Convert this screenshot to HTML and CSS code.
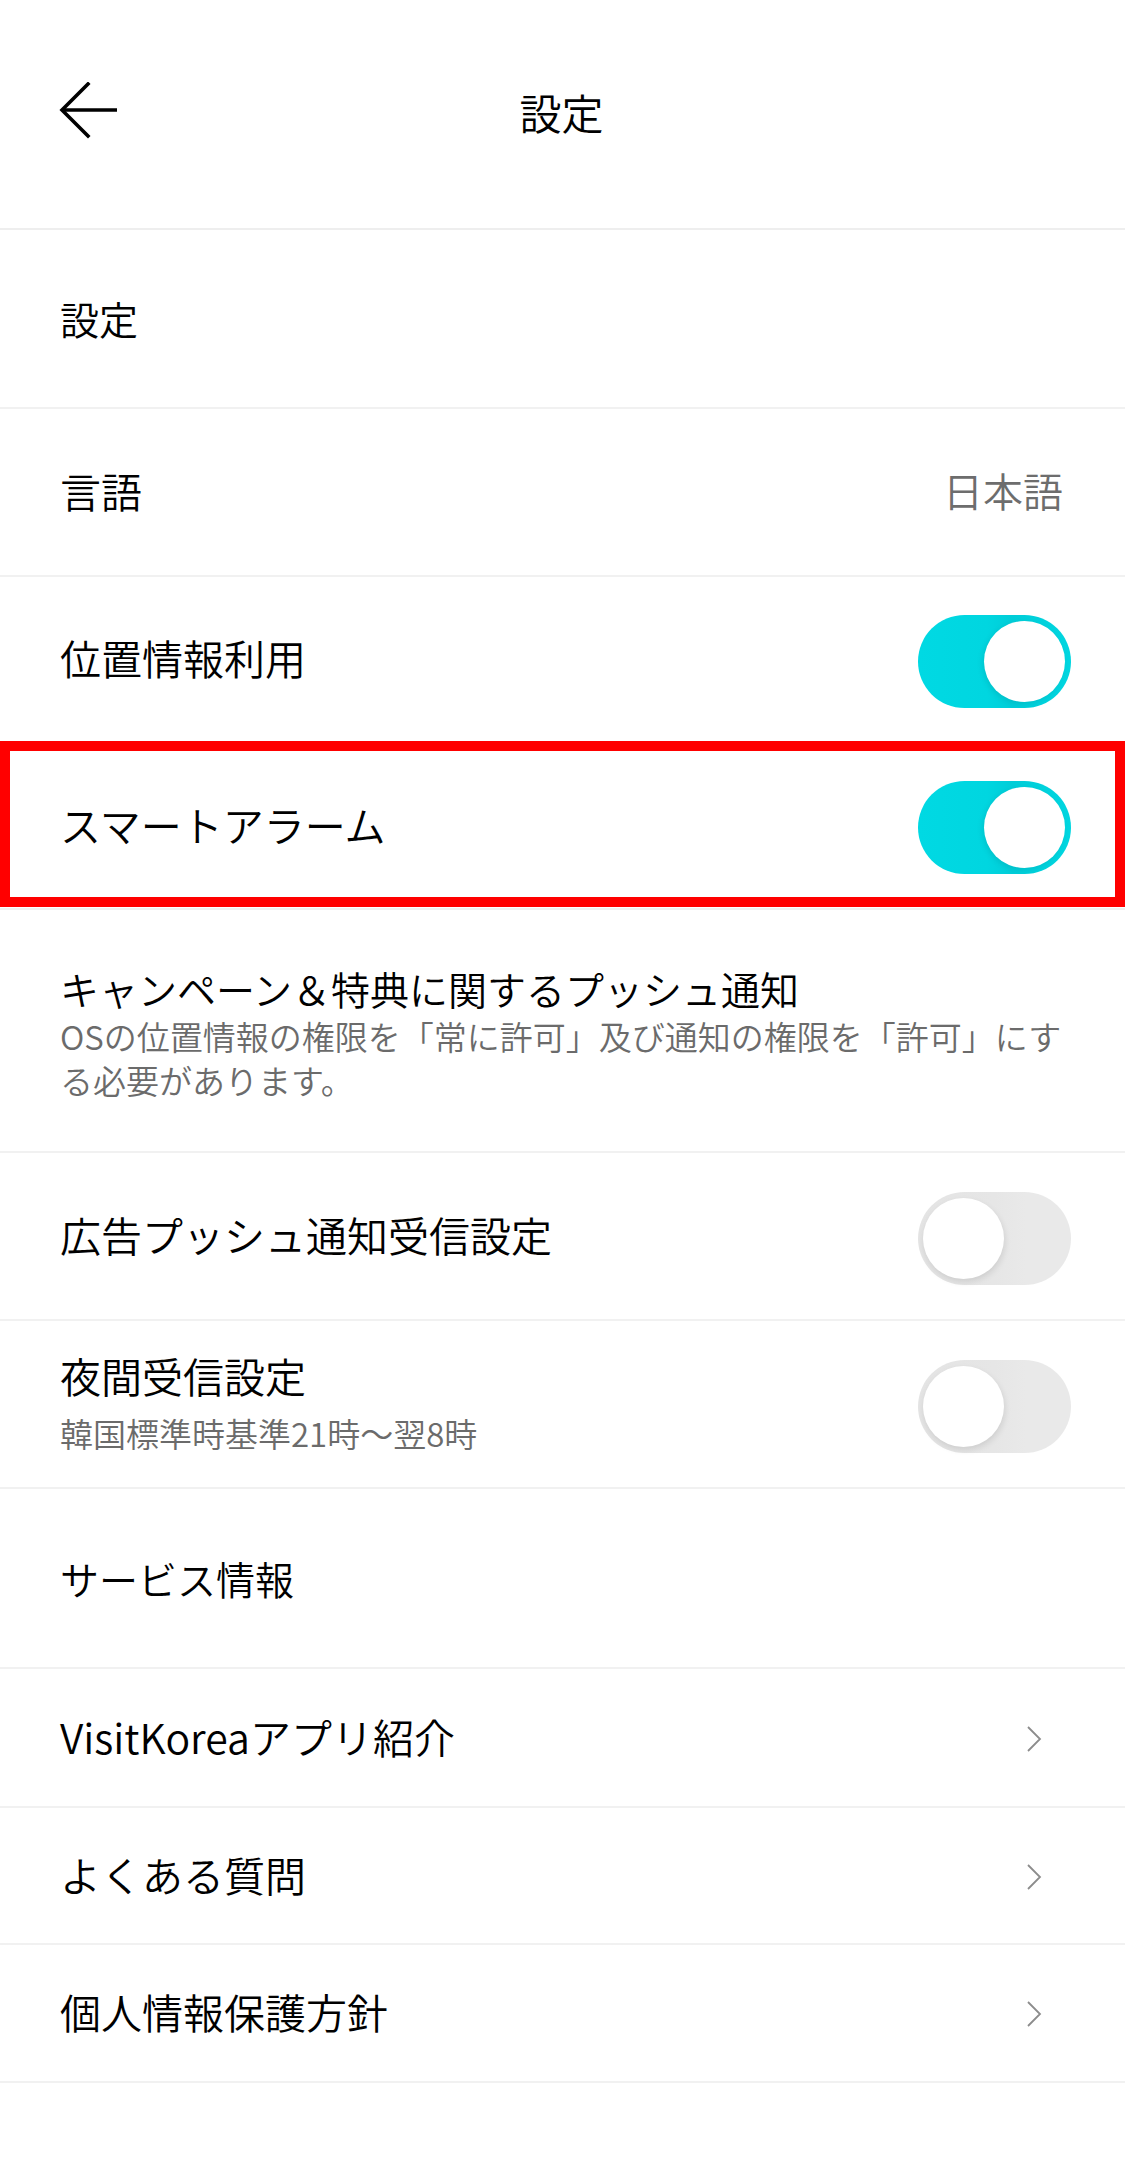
FILE: index.html
```html
<!DOCTYPE html>
<html lang="ja">
<head>
<meta charset="utf-8">
<title>設定</title>
<link rel="stylesheet" href="styles.css">
</head>
<body>
<div class="screen">
  <header class="topbar">
    <div class="back">
      <svg width="60" height="60" viewBox="0 0 60 60" aria-hidden="true">
        <polyline points="29,2 3,28 29,54" fill="none" stroke="#000" stroke-width="3.6" stroke-linecap="square" stroke-linejoin="miter"/>
        <line x1="4" y1="28" x2="58" y2="28" stroke="#000" stroke-width="3.6"/>
      </svg>
    </div>
    <h1 class="title">設定</h1>
    <div class="spacer"></div>
  </header>

  <div class="row section h179"><span class="section-label">設定</span></div>

  <div class="row h168">
    <span class="label">言語</span>
    <span class="value">日本語</span>
  </div>

  <div class="row h166">
    <span class="label">位置情報利用</span>
    <span class="toggle on"><span class="knob"></span></span>
  </div>

  <div class="row h167 highlighted">
    <span class="label">スマートアラーム</span>
    <span class="toggle on"><span class="knob"></span></span>
    <span class="redbox"></span>
  </div>

  <div class="row h243 campaign">
    <div class="text">
      <div class="label">キャンペーン＆特典に関するプッシュ通知</div>
      <div class="sub">OSの位置情報の権限を「常に許可」及び通知の権限を「許可」にする必要があります。</div>
    </div>
  </div>

  <div class="row h168">
    <span class="label">広告プッシュ通知受信設定</span>
    <span class="toggle off"><span class="knob"></span></span>
  </div>

  <div class="row h168">
    <div class="text">
      <div class="label">夜間受信設定</div>
      <div class="sub spaced">韓国標準時基準21時〜翌8時</div>
    </div>
    <span class="toggle off"><span class="knob"></span></span>
  </div>

  <div class="row section h180"><span class="section-label">サービス情報</span></div>

  <div class="row h139">
    <span class="label">VisitKoreaアプリ紹介</span>
    <svg class="chev" width="16" height="26" viewBox="0 0 16 26" aria-hidden="true"><polyline points="2,1 14,13 2,25" fill="none" stroke="#8c8c8c" stroke-width="1.8"/></svg>
  </div>

  <div class="row h137">
    <span class="label">よくある質問</span>
    <svg class="chev" width="16" height="26" viewBox="0 0 16 26" aria-hidden="true"><polyline points="2,1 14,13 2,25" fill="none" stroke="#8c8c8c" stroke-width="1.8"/></svg>
  </div>

  <div class="row h138">
    <span class="label">個人情報保護方針</span>
    <svg class="chev" width="16" height="26" viewBox="0 0 16 26" aria-hidden="true"><polyline points="2,1 14,13 2,25" fill="none" stroke="#8c8c8c" stroke-width="1.8"/></svg>
  </div>
</div>
</body>
</html>
```

FILE: styles.css
```css
* { box-sizing: border-box; }
html, body {
  margin: 0;
  padding: 0;
  background: #ffffff;
}
body {
  font-family: "Noto Sans CJK JP", "Noto Sans", sans-serif;
  font-weight: 350;
  color: #000;
  width: 1125px;
  height: 2184px;
  overflow: hidden;
}
.screen {
  width: 1125px;
  display: flex;
  flex-direction: column;
}
.topbar {
  height: 230px;
  border-bottom: 2px solid #eeeeee;
  display: grid;
  grid-template-columns: 1fr auto 1fr;
  align-items: center;
  padding-bottom: 4px;
}
.back {
  padding-left: 59px;
  display: flex;
  align-items: center;
  height: 60px;
}
.back svg { display: block; }
.title {
  margin: 0;
  font-size: 42px;
  font-weight: 350;
  line-height: 1.2;
  text-align: center;
  margin-right: 2px;
}
.row {
  position: relative;
  display: flex;
  align-items: center;
  justify-content: space-between;
  padding: 0 54px 0 60px;
  border-bottom: 2px solid #f1f1f1;
}
.h179 { height: 179px; }
.h180 { height: 180px; }
.h168 { height: 168px; }
.h166 { height: 166px; }
.h167 { height: 167px; }
.h243 { height: 243px; }
.h139 { height: 139px; }
.h137 { height: 137px; }
.h138 { height: 138px; }

.section-label {
  font-size: 39px;
  line-height: 1.2;
}
.label {
  font-size: 41px;
  line-height: 52px;
  margin-top: -4px;
}
.value {
  font-size: 40px;
  line-height: 50px;
  color: #6d6d6d;
  margin-right: 8px;
  margin-top: -4px;
}
.text {
  display: flex;
  flex-direction: column;
}
.sub {
  font-size: 33px;
  line-height: 44px;
  color: #6b6b6b;
}
.sub.spaced { margin-top: 10px; }
.campaign {
  padding-right: 48px;
  padding-top: 2px;
  align-items: center;
}
.campaign .label {
  margin-top: 0;
  font-size: 39px;
  line-height: 52px;
}

.toggle {
  position: relative;
  width: 153px;
  height: 93px;
  border-radius: 47px;
  flex: none;
  margin-top: 4px;
}
.toggle.on {
  background: linear-gradient(90deg, #00d9e3 0%, #00d6e0 45%, #00cdd8 62%, #00d6e0 100%);
}
.toggle.off {
  background: linear-gradient(90deg, #e4e4e4 0%, #e6e6e6 50%, #e9e9e9 70%, #e9e9e9 100%);
}
.knob {
  position: absolute;
  top: 6px;
  width: 81px;
  height: 81px;
  border-radius: 50%;
  background: #fff;
}
.toggle.on .knob {
  right: 6px;
  box-shadow: -2px 2px 5px rgba(0, 120, 130, 0.18);
}
.toggle.off .knob {
  left: 5px;
  box-shadow: 1px 3px 6px rgba(0, 0, 0, 0.10);
}
.chev {
  display: block;
  margin-right: 29px;
  margin-top: 2px;
}
.redbox {
  position: absolute;
  left: 0;
  right: 0;
  top: -2px;
  height: 166px;
  border: 10px solid #ff0000;
  pointer-events: none;
}
```
